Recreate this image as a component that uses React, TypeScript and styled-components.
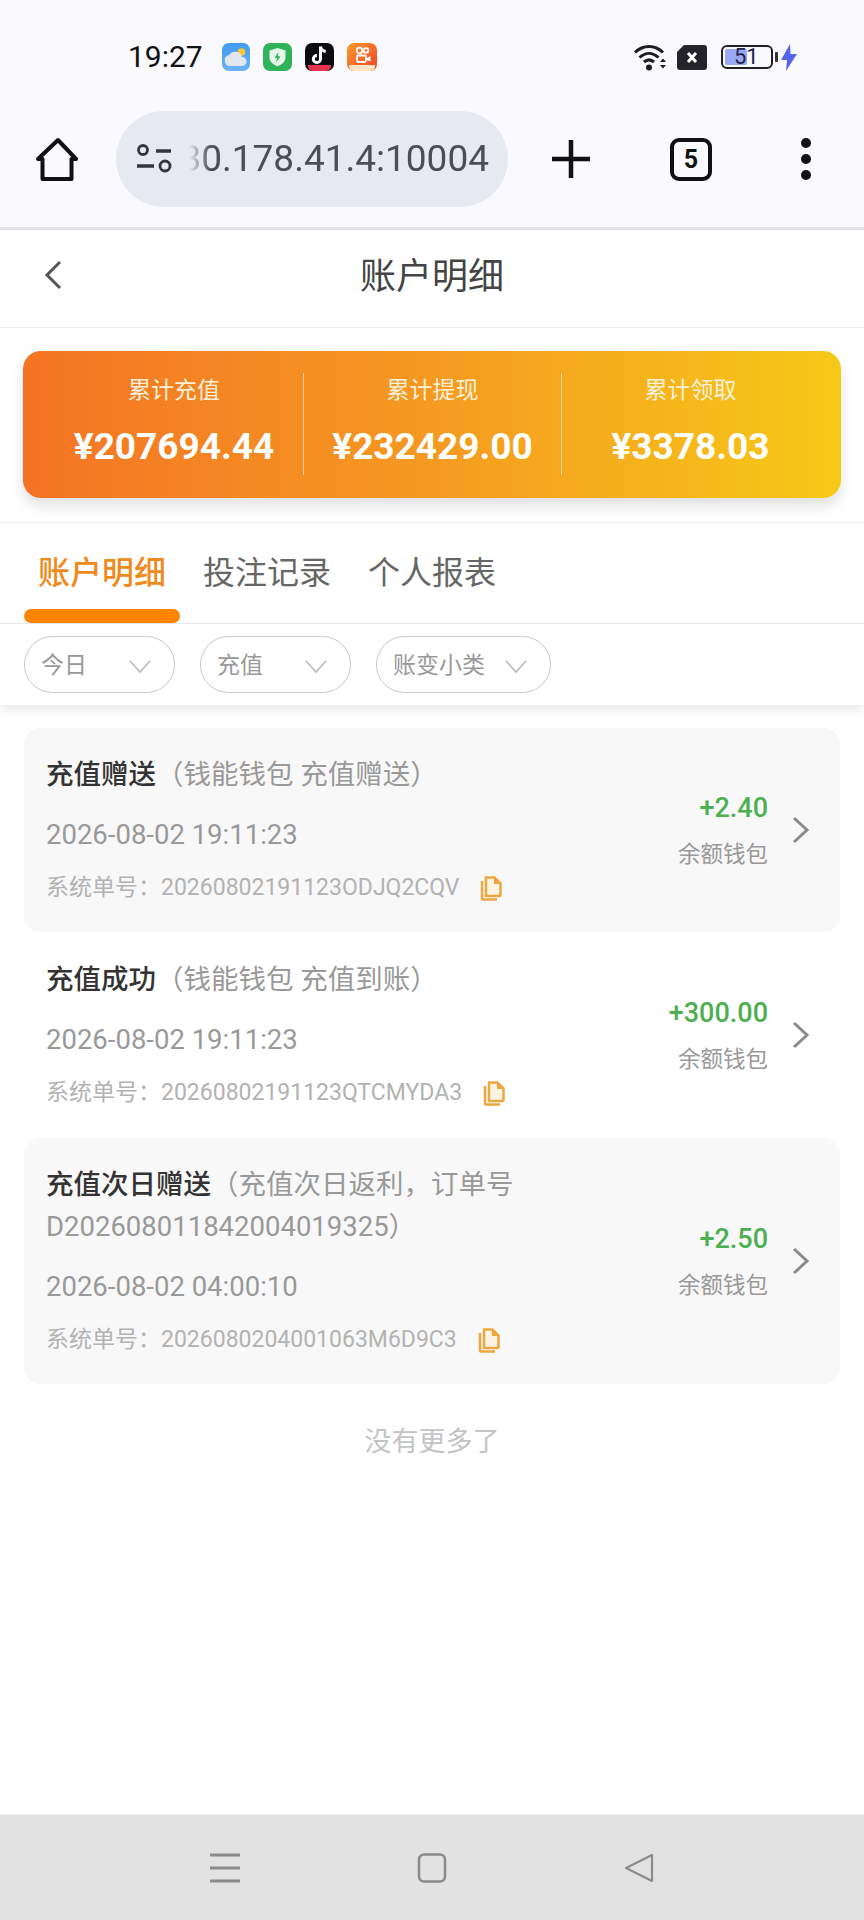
import React from "react";
import styled, { createGlobalStyle } from "styled-components";

const Global = createGlobalStyle`
  html, body { margin: 0; padding: 0; background: #fff; }
  body { font-family: Roboto, "Noto Sans CJK SC", sans-serif; }
  * { box-sizing: border-box; }
`;

const Page = styled.div`
  width: 864px;
  height: 1920px;
  display: flex;
  flex-direction: column;
  overflow: hidden;
  background: #fff;
`;

const StatusBar = styled.div`
  height: 111px;
  flex: none;
  background: #f9f9fe;
  display: flex;
  align-items: flex-start;
  padding: 43px 67px 0 128px;
`;
const Time = styled.div`
  font-size: 30px;
  line-height: 28px;
  width: 94px;
  color: #111;
`;
const AppIcons = styled.div`
  display: flex;
  gap: 13px;
  svg { display: block; }
`;
const StatusRight = styled.div`
  margin-left: auto;
  display: flex;
  align-items: center;
  height: 28px;
`;
const Battery = styled.div`
  width: 52px;
  height: 24px;
  border: 2px solid #222;
  border-radius: 6px;
  margin-left: 14px;
  position: relative;
  padding: 2px;
  display: flex;
`;
const BatteryFill = styled.div`
  height: 100%;
  background: #9aa8f2;
  border-radius: 2px;
`;
const BatteryText = styled.span`
  position: absolute;
  left: 11px;
  top: 0;
  font-size: 22px;
  line-height: 20px;
  color: #1f2350;
`;
const BatteryCap = styled.div`
  width: 3px;
  height: 10px;
  background: #333;
  margin-left: 2px;
  border-radius: 1px;
`;

const Toolbar = styled.div`
  height: 116px;
  flex: none;
  background: #f9f9fe;
  display: flex;
  align-items: flex-start;
  padding-left: 36px;
`;
const ToolIcon = styled.svg`
  display: block;
  flex: none;
`;
const UrlPill = styled.div`
  width: 392px;
  height: 96px;
  margin-left: 38px;
  border-radius: 48px;
  background: #e7e9f1;
  display: flex;
  align-items: center;
  padding: 0 19px 0 20px;
`;
const UrlClip = styled.div`
  flex: 1;
  min-width: 0;
  margin-left: 17px;
  overflow: hidden;
  display: flex;
  justify-content: flex-end;
  -webkit-mask-image: linear-gradient(90deg, transparent 0, #000 22px);
  mask-image: linear-gradient(90deg, transparent 0, #000 22px);
`;
const UrlText = styled.span`
  font-size: 37px;
  line-height: 48px;
  color: #4b4e56;
  white-space: nowrap;
`;
const ToolGroup = styled.div`
  display: flex;
  align-items: center;
  height: 96px;
`;
const TabCount = styled.div`
  width: 42px;
  height: 43px;
  border: 4px solid #111;
  border-radius: 9px;
  margin-left: 80px;
  display: flex;
  align-items: center;
  justify-content: center;
  font-size: 25px;
  font-weight: 700;
  color: #111;
`;
const Dots = styled.div`
  display: flex;
  flex-direction: column;
  gap: 6px;
  margin-left: 89px;
`;
const Dot = styled.span`
  width: 10px;
  height: 10px;
  border-radius: 50%;
  background: #111;
`;

const Header = styled.div`
  height: 101px;
  flex: none;
  border-top: 3px solid #e2e3e8;
  border-bottom: 1px solid #ececec;
  padding-bottom: 11px;
  display: flex;
  align-items: center;
  justify-content: center;
  position: relative;
  font-size: 36px;
  color: #444;
`;
const BackIcon = styled.svg`
  position: absolute;
  left: 44px;
  top: 30px;
`;

const SummarySection = styled.div`
  height: 195px;
  flex: none;
  padding: 23px 23px 0 23px;
  border-bottom: 1px solid #ececec;
`;
const SummaryCard = styled.div`
  height: 147px;
  border-radius: 18px;
  background: linear-gradient(90deg, #f47324 0%, #f59a21 50%, #f6c917 100%);
  box-shadow: 0 8px 14px rgba(0, 0, 0, 0.12);
  display: grid;
  grid-template-columns: repeat(3, 258px);
  padding: 22px 0 0 22px;
`;
const Stat = styled.div<{ $divider?: boolean }>`
  height: 102px;
  padding-top: 2px;
  display: flex;
  flex-direction: column;
  align-items: center;
  border-left: ${(p) => (p.$divider ? "1px solid rgba(255,255,255,.55)" : "none")};
  color: #fff;
`;
const StatLabel = styled.div`
  font-size: 23px;
  line-height: 32px;
  color: #fdf0d8;
`;
const StatValue = styled.div`
  font-size: 37px;
  line-height: 44px;
  font-weight: 700;
  margin-top: 18px;
`;

const Tabs = styled.div`
  height: 101px;
  flex: none;
  display: flex;
  gap: 9px;
  padding-left: 24px;
  border-bottom: 1px solid #ececec;
`;
const Tab = styled.div<{ $active?: boolean }>`
  width: 156px;
  height: 100px;
  padding-top: 28px;
  text-align: center;
  font-size: 32px;
  line-height: 44px;
  color: ${(p) => (p.$active ? "#ef8b1c" : "#666")};
  font-weight: ${(p) => (p.$active ? 500 : 400)};
  position: relative;
  &::after {
    content: "";
    display: ${(p) => (p.$active ? "block" : "none")};
    position: absolute;
    left: 0;
    right: 0;
    bottom: 0;
    height: 14px;
    background: #ff8500;
    border-radius: 7px;
  }
`;

const Filters = styled.div`
  height: 81px;
  flex: none;
  display: flex;
  gap: 25px;
  padding: 12px 24px 0;
  box-shadow: 0 4px 10px rgba(0, 0, 0, 0.1);
  position: relative;
`;
const FilterPill = styled.div`
  height: 57px;
  min-width: 151px;
  border: 1.5px solid #c8c8c8;
  border-radius: 29px;
  display: flex;
  align-items: center;
  justify-content: space-between;
  gap: 20px;
  padding: 0 23px 4px 16px;
  font-size: 23px;
  color: #999;
`;

const List = styled.div`
  flex: 1;
  display: flex;
  flex-direction: column;
  gap: 1px;
  padding: 23px 24px 0;
`;
const Row = styled.div<{ $shaded?: boolean }>`
  display: flex;
  align-items: center;
  border-radius: 16px;
  background: ${(p) => (p.$shaded ? "#f8f8f8" : "#fff")};
  padding: 26px 30px 29px 22px;
`;
const RowMain = styled.div`
  flex: 1;
  min-width: 0;
  padding-right: 90px;
`;
const RowTitle = styled.div`
  font-size: 27.5px;
  line-height: 42px;
  color: #999;
`;
const RowTitleStrong = styled.span`
  color: #333;
  font-weight: 500;
`;
const RowDate = styled.div`
  font-size: 27.5px;
  line-height: 38px;
  color: #999;
  margin-top: 20px;
`;
const RowOrder = styled.div`
  display: flex;
  align-items: center;
  font-size: 23px;
  line-height: 30px;
  color: #b2b2b2;
  margin-top: 19px;
  white-space: nowrap;
`;
const CopyIcon = styled.svg`
  margin-left: 21px;
  flex: none;
`;
const RowSide = styled.div`
  display: flex;
  flex-direction: column;
  align-items: flex-end;
  flex: none;
  padding-top: 3px;
`;
const Amount = styled.div`
  font-size: 27px;
  line-height: 36px;
  font-weight: 500;
  color: #4caf50;
`;
const Wallet = styled.div`
  font-size: 22.5px;
  line-height: 32px;
  color: #999;
  margin-top: 12px;
`;
const RowChevron = styled.svg`
  margin: 3px 0 0 24px;
  flex: none;
`;
const NoMore = styled.div`
  text-align: center;
  font-size: 27px;
  line-height: 40px;
  color: #c4c4c4;
  margin-top: 37px;
`;

const NavBar = styled.div`
  height: 106px;
  flex: none;
  background: #e2e2e2;
  border-top: 1px solid #ececec;
  display: flex;
  align-items: flex-start;
  justify-content: center;
  gap: 177px;
  padding-top: 38px;
`;

const Weather = () => (
  <svg width="28" height="28" viewBox="0 0 28 28">
    <defs>
      <linearGradient id="w" x1="0" y1="0" x2="0" y2="1">
        <stop offset="0" stopColor="#3f9bf0" />
        <stop offset="1" stopColor="#6db2f7" />
      </linearGradient>
    </defs>
    <rect width="28" height="28" rx="7" fill="url(#w)" />
    <circle cx="19.500" cy="9" r="3.800" fill="#f8c53a" />
    <path d="M8 23a5.500 5.500 0 0 1-.8-10.900A7 7 0 0 1 20 14a4.500 4.500 0 0 1 .2 9z" fill="#dfe7ef" />
  </svg>
);
const Shield = () => (
  <svg width="29" height="28" viewBox="0 0 29 28">
    <rect width="29" height="28" rx="7" fill="#2fb25a" />
    <path d="M14.5 5l8 2.6v6.6c0 4.4-3.4 7.4-8 9-4.6-1.6-8-4.6-8-9V7.600z" fill="#e6f7ea" />
    <path d="M15.500 9l-4 6h2.600l-.8 4.500 4.200-6.200h-2.700z" fill="#2fb25a" />
  </svg>
);
const TikTok = () => (
  <svg width="29" height="28" viewBox="0 0 29 28">
    <rect width="29" height="28" rx="7" fill="#0b0b10" />
    <path d="M15.500 3.500v12.500a3.600 3.600 0 1 1-3.600-3.600M15.500 3.500c.4 3 2.400 4.600 5.200 4.900" fill="none" stroke="#fff" strokeWidth="3" />
    <path d="M3 22h23v1a5 5 0 0 1-5 5H8a5 5 0 0 1-5-5z" fill="#e5344f" />
  </svg>
);
const Kuaishou = () => (
  <svg width="30" height="28" viewBox="0 0 30 28">
    <defs>
      <linearGradient id="k" x1="0" y1="0" x2="1" y2="1">
        <stop offset="0" stopColor="#fb9a2b" />
        <stop offset="1" stopColor="#f2412c" />
      </linearGradient>
    </defs>
    <rect width="30" height="28" rx="7" fill="url(#k)" />
    <circle cx="12.500" cy="7.500" r="2.800" fill="none" stroke="#fff" strokeWidth="1.800" />
    <circle cx="19" cy="7.500" r="2.300" fill="none" stroke="#fff" strokeWidth="1.800" />
    <rect x="10" y="12.500" width="9" height="6.500" rx="1.500" fill="none" stroke="#fff" strokeWidth="1.800" />
    <path d="M20 15l3.500-2v5.500L20 17z" fill="#fff" />
    <path d="M2 22h26v1a5 5 0 0 1-5 5H7a5 5 0 0 1-5-5z" fill="#fde6c8" />
  </svg>
);
const Wifi = () => (
  <svg width="36" height="28" viewBox="0 0 36 28" fill="none">
    <path d="M2 9.500C10 1.500 22 1.500 30 9.500M6.500 14.500c6-5.500 13-5.500 19 0M11 19c3.500-3 6.500-3 10 0" stroke="#1d1d22" strokeWidth="3" />
    <circle cx="16" cy="24.500" r="3" fill="#1d1d22" />
    <path d="M27 19l3-3.500 3 3.500zM27 22l3 3.500 3-3.500z" fill="#1d1d22" />
  </svg>
);
const NoSim = () => (
  <svg width="30" height="25" viewBox="0 0 30 25" style={{ marginLeft: 8 }}>
    <path d="M7 0h20a3 3 0 0 1 3 3v19a3 3 0 0 1-3 3H3a3 3 0 0 1-3-3V7z" fill="#24242a" />
    <path d="M11 8l8 9M19 8l-8 9" stroke="#fff" strokeWidth="3" />
  </svg>
);
const Bolt = () => (
  <svg width="16" height="27" viewBox="0 0 16 27" style={{ marginLeft: 3 }}>
    <path d="M9 0L0 16h6L5 27l11-17H9.500z" fill="#5664ea" />
  </svg>
);

const Copy = () => (
  <CopyIcon width="22" height="25" viewBox="0 0 22 25" fill="none">
    <path d="M2 5v17.500a1 1 0 0 0 1 1h14" stroke="#eea63f" strokeWidth="2.500" />
    <path d="M6 1.500h8.500l6 6V19a1 1 0 0 1-1 1H6z" fill="#fdf3e3" stroke="#eea63f" strokeWidth="2.500" />
    <path d="M14 1.500l6.500 6.500H14z" fill="#eea63f" />
  </CopyIcon>
);
const Chevron = () => (
  <RowChevron width="18" height="28" viewBox="0 0 18 28" fill="none">
    <path d="M2 2l13 12L2 26" stroke="#8a8a8a" strokeWidth="3" />
  </RowChevron>
);
const Caret = () => (
  <svg width="22" height="13" viewBox="0 0 22 13" fill="none" style={{ marginTop: 7 }}>
    <path d="M1 1l10 11L21 1" stroke="#bdbdbd" strokeWidth="1.800" />
  </svg>
);

type Record = {
  title: string;
  desc: string;
  date: string;
  order: string;
  amount: string;
  shaded: boolean;
};
const records: Record[] = [
  { title: "充值赠送", desc: "（钱能钱包 充值赠送）", date: "2026-08-02 19:11:23", order: "20260802191123ODJQ2CQV", amount: "+2.40", shaded: true },
  { title: "充值成功", desc: "（钱能钱包 充值到账）", date: "2026-08-02 19:11:23", order: "20260802191123QTCMYDA3", amount: "+300.00", shaded: false },
  { title: "充值次日赠送", desc: "（充值次日返利，订单号D202608011842004019325）", date: "2026-08-02 04:00:10", order: "2026080204001063M6D9C3", amount: "+2.50", shaded: true },
];

export default function App() {
  return (
    <Page>
      <Global />
      <StatusBar>
        <Time>19:27</Time>
        <AppIcons>
          <Weather />
          <Shield />
          <TikTok />
          <Kuaishou />
        </AppIcons>
        <StatusRight>
          <Wifi />
          <NoSim />
          <Battery>
            <BatteryFill style={{ width: "51%" }} />
            <BatteryText>51</BatteryText>
          </Battery>
          <BatteryCap />
          <Bolt />
        </StatusRight>
      </StatusBar>
      <Toolbar>
        <ToolGroup>
          <ToolIcon width="42" height="44" viewBox="0 0 42 44" fill="none">
            <path d="M22 3L40 22h-4.500v20H6.500V22H2z" stroke="#111" strokeWidth="4" strokeLinejoin="round" />
          </ToolIcon>
        </ToolGroup>
        <UrlPill>
          <ToolIcon width="36" height="30" viewBox="0 0 36 30" fill="none">
            <circle cx="7" cy="6" r="4.500" stroke="#33363d" strokeWidth="2.800" />
            <path d="M20 7h15M1 22h17" stroke="#33363d" strokeWidth="3.500" />
            <circle cx="29" cy="22" r="5" stroke="#33363d" strokeWidth="2.800" />
          </ToolIcon>
          <UrlClip>
            <UrlText>30.178.41.4:10004</UrlText>
          </UrlClip>
        </UrlPill>
        <ToolGroup>
          <ToolIcon width="38" height="38" viewBox="0 0 38 38" style={{ marginLeft: 44 }} fill="none">
            <path d="M19 0v38M0 19h38" stroke="#111" strokeWidth="4.500" />
          </ToolIcon>
          <TabCount>5</TabCount>
          <Dots>
            <Dot />
            <Dot />
            <Dot />
          </Dots>
        </ToolGroup>
      </Toolbar>
      <Header>
        <BackIcon width="18" height="30" viewBox="0 0 18 30" fill="none">
          <path d="M16 2L3 15l13 13" stroke="#555" strokeWidth="3" />
        </BackIcon>
        账户明细
      </Header>
      <SummarySection>
        <SummaryCard>
          <Stat>
            <StatLabel>累计充值</StatLabel>
            <StatValue>¥207694.44</StatValue>
          </Stat>
          <Stat $divider>
            <StatLabel>累计提现</StatLabel>
            <StatValue>¥232429.00</StatValue>
          </Stat>
          <Stat $divider>
            <StatLabel>累计领取</StatLabel>
            <StatValue>¥3378.03</StatValue>
          </Stat>
        </SummaryCard>
      </SummarySection>
      <Tabs>
        <Tab $active>账户明细</Tab>
        <Tab>投注记录</Tab>
        <Tab>个人报表</Tab>
      </Tabs>
      <Filters>
        <FilterPill>今日<Caret /></FilterPill>
        <FilterPill>充值<Caret /></FilterPill>
        <FilterPill>账变小类<Caret /></FilterPill>
      </Filters>
      <List>
        {records.map((r) => (
          <Row key={r.order} $shaded={r.shaded}>
            <RowMain>
              <RowTitle>
                <RowTitleStrong>{r.title}</RowTitleStrong>
                {r.desc}
              </RowTitle>
              <RowDate>{r.date}</RowDate>
              <RowOrder>
                系统单号：{r.order}
                <Copy />
              </RowOrder>
            </RowMain>
            <RowSide>
              <Amount>{r.amount}</Amount>
              <Wallet>余额钱包</Wallet>
            </RowSide>
            <Chevron />
          </Row>
        ))}
        <NoMore>没有更多了</NoMore>
      </List>
      <NavBar>
        <svg width="30" height="30" viewBox="0 0 30 30" fill="none">
          <path d="M0 2h30M0 15h30M0 28h30" stroke="#8b8b8b" strokeWidth="2.800" />
        </svg>
        <svg width="30" height="30" viewBox="0 0 30 30" fill="none">
          <rect x="2" y="1.500" width="26" height="27" rx="5" stroke="#8b8b8b" strokeWidth="2.500" />
        </svg>
        <svg width="30" height="30" viewBox="0 0 30 30" fill="none">
          <path d="M28 2v26L2 15z" stroke="#8b8b8b" strokeWidth="2.200" strokeLinejoin="round" />
        </svg>
      </NavBar>
    </Page>
  );
}
